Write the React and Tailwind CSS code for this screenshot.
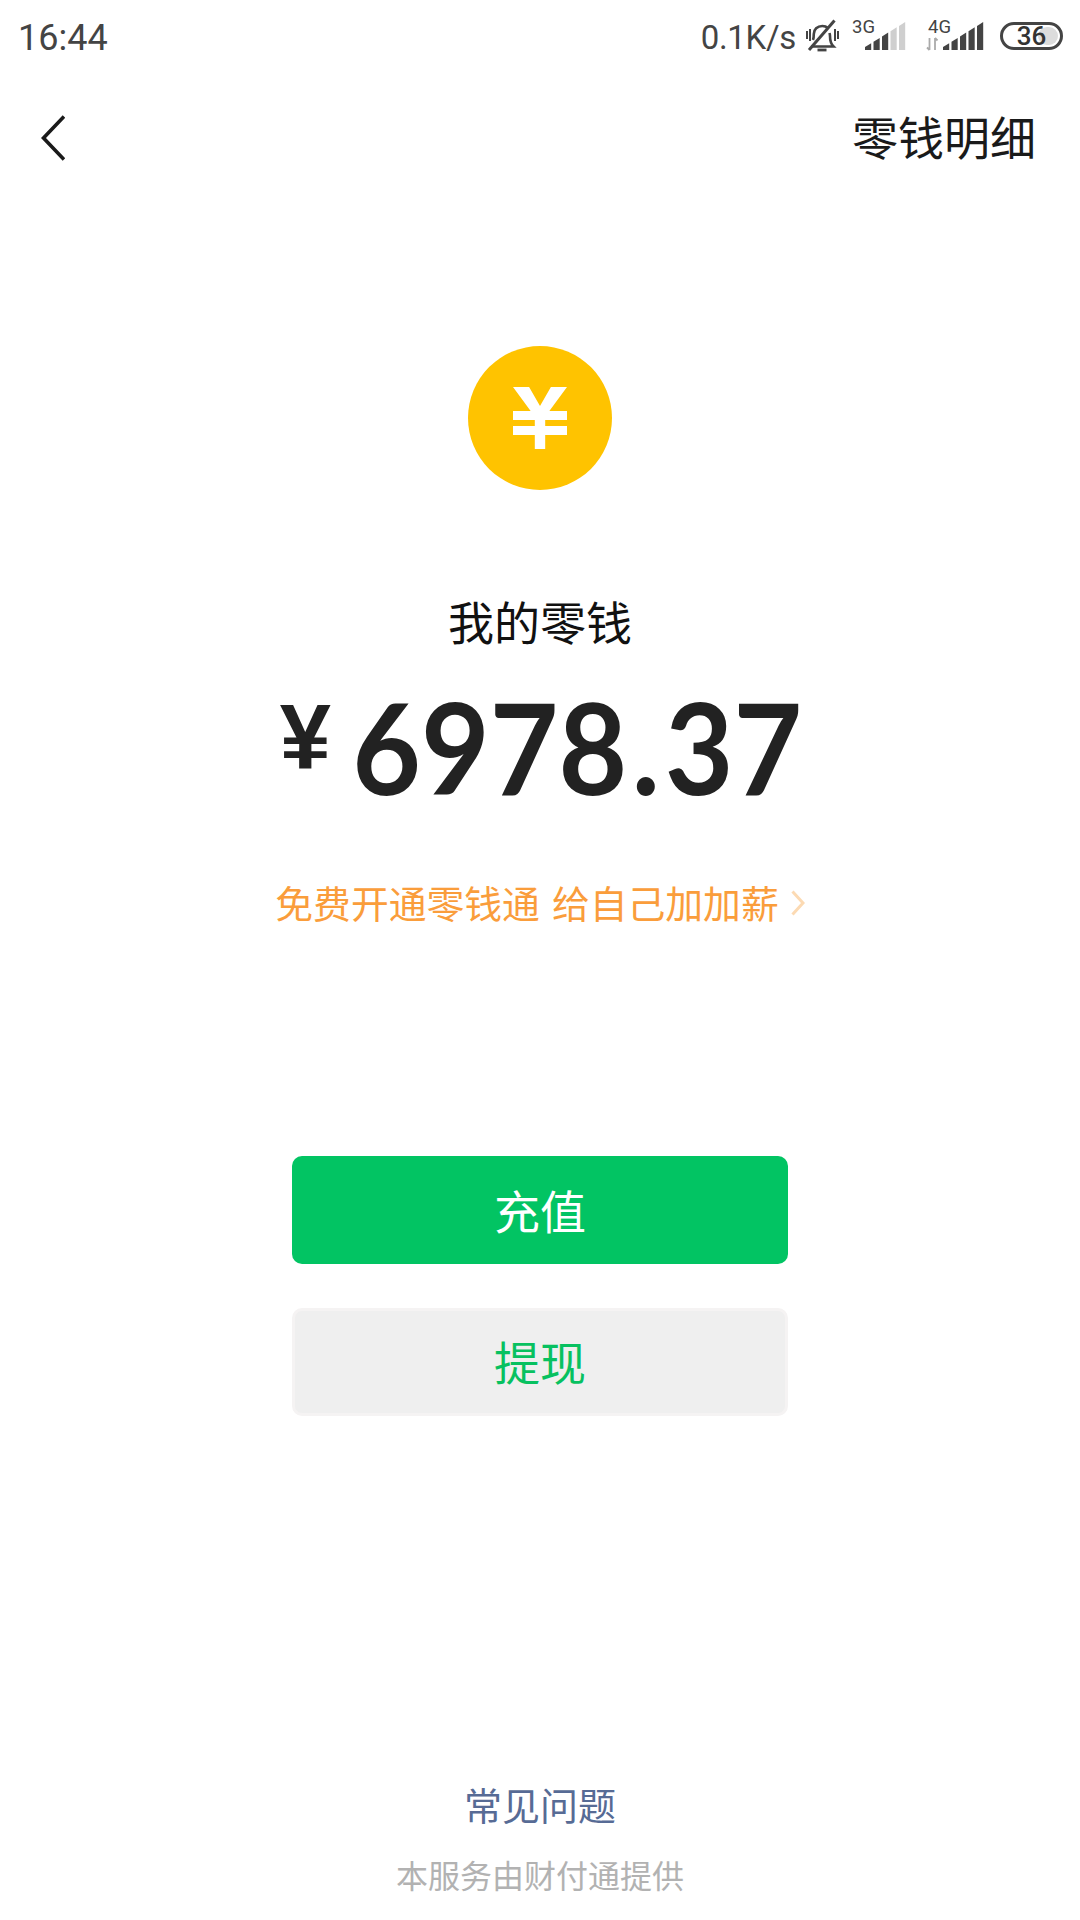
const CJK = "font-['Noto_Sans_CJK_SC','Noto_Sans',sans-serif]"

// five bars, tops follow one diagonal line
function Bars({ grey = 0 }) {
  const top = (x) => 25 - 0.62 * x
  return [0, 1, 2, 3, 4].map((i) => {
    const x0 = i * 8.5
    const x1 = x0 + 6.2
    return (
      <polygon
        key={i}
        points={`${x0},28 ${x0},${top(x0)} ${x1},${top(x1)} ${x1},28`}
        fill={i >= 5 - grey ? "#cfcfcf" : "#444"}
      />
    )
  })
}

function StatusIcons() {
  return (
    <div className="flex items-center">
      <span className="mt-[4px] text-[33px] leading-[40px] tracking-[-0.3px] text-[#444] font-['Roboto',sans-serif]">0.1K/s</span>
      {/* muted bell */}
      <svg className="ml-[9px]" width="34" height="34" viewBox="0 0 34 34" fill="none" stroke="#444" strokeWidth="2.6">
        <path d="M6 27.500h22.500c-3-3-3.500-6-3.500-10.500 0-1-.2-2-.5-3" />
        <path d="M8 21c.8-2 .8-4 .8-6 0-4.500 3.500-8 8.500-8 2.200 0 4.200.7 5.500 2" />
        <path d="M12.500 31h9" strokeWidth="2.800" />
        <path d="M2 12v8M5 10v12M30 10v12M33 12v8" strokeWidth="2" />
        <path d="M29.500 1.500L4 31" strokeWidth="3" />
      </svg>
      <svg className="ml-[13px] overflow-visible" width="60" height="30" viewBox="0 0 60 30">
        <text x="0" y="11.500" fontSize="18.500" fill="#444" fontFamily="Roboto, sans-serif">3G</text>
        <g transform="translate(13 1)">
          <Bars grey={2} />
        </g>
      </svg>
      <svg className="ml-[14px] overflow-visible" width="57" height="30" viewBox="0 0 57 30">
        <text x="2" y="11.500" fontSize="18.500" fill="#444" fontFamily="Roboto, sans-serif">4G</text>
        <path d="M3.500 17v12M1 26.500L3.500 29M9 29V17M9 17l2.500 2.500" stroke="#aaa" strokeWidth="1.800" fill="none" />
        <g transform="translate(17 1)">
          <Bars />
        </g>
      </svg>
      <div className="relative ml-[17px] flex h-[28px] w-[63px] items-center justify-center overflow-hidden rounded-full border-[3px] border-[#444]">
        <div className="absolute right-[2px] top-[2px] h-[18px] w-[20px] rounded-full bg-[#dcdcdc]" />
        <span className="relative text-[26px] font-medium leading-[22px] text-[#333] font-['Roboto',sans-serif]">36</span>
      </div>
    </div>
  )
}

export default function App() {
  return (
    <div className={`flex h-[1920px] w-[1080px] flex-col bg-white ${CJK}`}>
      {/* status bar */}
      <div className="flex h-[72px] items-center justify-between pl-[18px] pr-[17px]">
        <span className="mt-[4px] text-[36px] leading-[44px] text-[#444] font-['Roboto',sans-serif]">16:44</span>
        <StatusIcons />
      </div>

      {/* header */}
      <div className="flex h-[132px] items-center justify-between pl-[41px] pr-[44px]">
        <svg width="24" height="46" viewBox="0 0 24 46" fill="none" stroke="#1a1a1a" strokeWidth="3.6">
          <path d="M23 1.500L2.500 23L23 44.500" />
        </svg>
        <span className="mb-[7px] text-[46px] leading-[60px] text-[#1a1a1a]">零钱明细</span>
      </div>

      {/* balance */}
      <div className="flex flex-col items-center">
        <div className="mt-[142px] flex h-[144px] w-[144px] items-center justify-center rounded-full bg-[#ffc300]">
          <svg className="mr-[1px]" width="54" height="62" viewBox="0 0 52 62" fill="#fff" preserveAspectRatio="none">
            <path d="M0 0h15.500L26 19 36.500 0H52L35 24h17v9H31v6h21v9H31v14H21V48H0v-9h21v-6H0v-9h17z" />
          </svg>
        </div>
        <div className="mt-[100px] text-[46px] leading-[60px] text-[#111]">我的零钱</div>
        <div className="mt-[30px] flex h-[140px] items-center justify-center pl-[16px] text-[#222] font-['Lato',sans-serif]">
          <span className="mb-[26px] mr-[7px] text-[92px] font-bold leading-none font-['Liberation_Sans',sans-serif]">¥</span>
          <span className="mb-[6px] scale-x-[0.94] text-[126px] font-bold leading-none">
            6978<span className="mx-[5px]">.</span>37
          </span>
        </div>
        <div className="mt-[57px] flex h-[50px] items-center text-[37.800px] leading-[50px] text-[#fa9d3b]">
          <span>免费开通零钱通</span>
          <span className="ml-[12px]">给自己加加薪</span>
          <svg className="ml-[12px] mt-[2px]" width="14" height="26" viewBox="0 0 14 26" fill="none" stroke="#fcdab3" strokeWidth="3">
            <path d="M1.500 1.500L12 13L1.500 24.500" />
          </svg>
        </div>

        {/* buttons */}
        <div className="mt-[229px] flex h-[108px] w-[496px] items-center justify-center rounded-[10px] bg-[#02c463] pb-[2px] text-[46px] text-white">
          充值
        </div>
        <div className="mt-[44px] flex h-[108px] w-[496px] items-center justify-center rounded-[10px] border-[3px] border-[#f5f3f3] bg-[#efefef] pb-[3px] text-[46px] text-[#07c160]">
          提现
        </div>
      </div>

      {/* footer */}
      <div className="mt-auto flex flex-col items-center gap-[23px] pb-[24px]">
        <div className="text-[38px] leading-[50px] text-[#576b95]">常见问题</div>
        <div className="text-[32px] leading-[44px] text-[#b2b2b2]">本服务由财付通提供</div>
      </div>
    </div>
  )
}
